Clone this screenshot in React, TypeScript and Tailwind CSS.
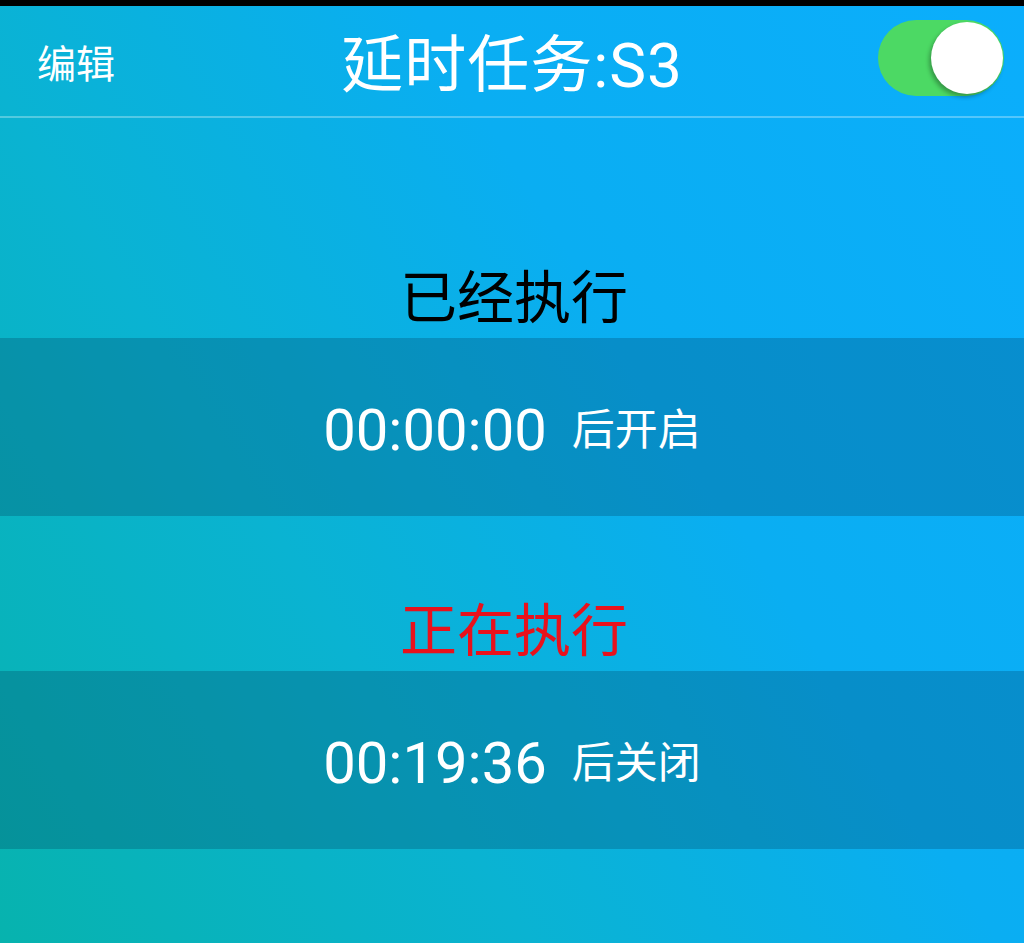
import React from "react";

export default function App() {
  const font = { fontFamily: '"Roboto","Noto Sans CJK SC",sans-serif' };
  return (
    <div
      className="w-[1024px] h-[943px] overflow-hidden flex flex-col bg-[linear-gradient(58deg,#07b3ae_0%,#0ab3d2_33%,#0aaef2_62%,#0baefc_100%)]"
      style={font}
    >
      <div className="h-[6px] bg-black shrink-0" />
      <div className="h-[112px] shrink-0 flex items-center justify-between pl-[37px] pr-[20px] pt-[9px] border-b-2 border-white/30">
        <span className="text-white text-[39px] leading-none w-[200px]">编辑</span>
        <span className="text-white text-[62px] leading-none tracking-[1px]">延时任务:S3</span>
        <div className="w-[217px] flex justify-end -mt-[15px]">
          <div className="w-[126px] h-[76px] rounded-full bg-[#4cd964] flex items-center justify-end pr-[1px]">
            <div className="w-[72px] h-[72px] rounded-full bg-white shadow-[-2px_3px_4px_rgba(0,0,0,0.3)]" />
          </div>
        </div>
      </div>

      <div className="pt-[150px] flex flex-col">
        <div className="h-[60px] flex items-center justify-center text-black text-[57px] leading-none pl-[4px]">
          已经执行
        </div>
        <div className="mt-[10px] h-[178px] bg-[#003050]/25 flex items-center justify-center text-white pt-[6px]">
          <span className="text-[58px] leading-none">00:00:00</span>
          <span className="ml-[25px] text-[43px] leading-none">后开启</span>
        </div>
      </div>

      <div className="pt-[85px] flex flex-col">
        <div className="h-[60px] flex items-center justify-center text-[#e8121c] text-[57px] leading-none pl-[4px]">
          正在执行
        </div>
        <div className="mt-[10px] h-[178px] bg-[#003050]/25 flex items-center justify-center text-white pt-[6px]">
          <span className="text-[58px] leading-none">00:19:36</span>
          <span className="ml-[25px] text-[43px] leading-none">后关闭</span>
        </div>
      </div>
    </div>
  );
}
